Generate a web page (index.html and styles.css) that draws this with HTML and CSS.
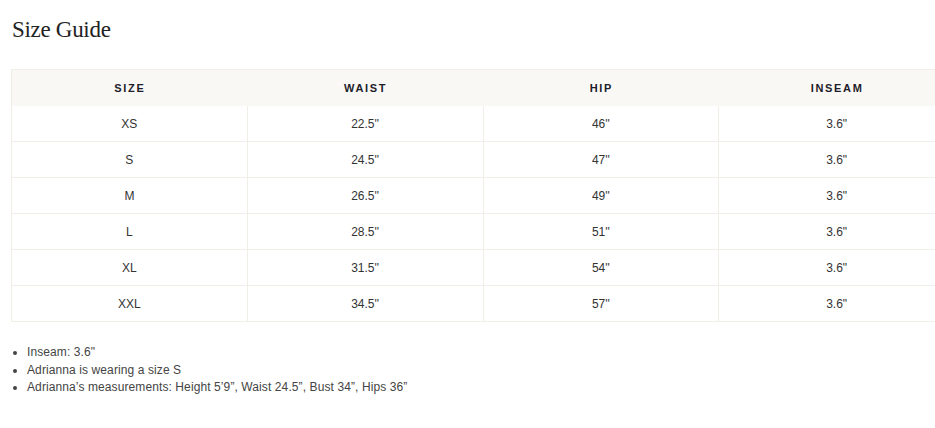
FILE: index.html
```html
<!DOCTYPE html>
<html lang="en">
<head>
<meta charset="utf-8">
<title>Size Guide</title>
<link rel="stylesheet" href="styles.css">
</head>
<body>
<div class="page">
  <h1 class="title">Size Guide</h1>
  <div class="table-wrap">
    <table class="size-table">
      <thead>
        <tr><th>SIZE</th><th>WAIST</th><th>HIP</th><th>INSEAM</th></tr>
      </thead>
      <tbody>
        <tr><td>XS</td><td>22.5''</td><td>46''</td><td>3.6"</td></tr>
        <tr><td>S</td><td>24.5''</td><td>47''</td><td>3.6"</td></tr>
        <tr><td>M</td><td>26.5''</td><td>49''</td><td>3.6"</td></tr>
        <tr><td>L</td><td>28.5''</td><td>51''</td><td>3.6"</td></tr>
        <tr><td>XL</td><td>31.5''</td><td>54''</td><td>3.6"</td></tr>
        <tr><td>XXL</td><td>34.5''</td><td>57''</td><td>3.6"</td></tr>
      </tbody>
    </table>
  </div>
  <ul class="notes">
    <li>Inseam: 3.6"</li>
    <li>Adrianna is wearing a size S</li>
    <li>Adrianna’s measurements: Height 5’9”, Waist 24.5”, Bust 34”, Hips 36”</li>
  </ul>
</div>
</body>
</html>
```
FILE: styles.css
```css
html, body {
  margin: 0;
  padding: 0;
  background: #ffffff;
}
body {
  overflow: hidden;
  font-family: "Liberation Sans", Arial, sans-serif;
}
.page {
  padding: 15px 0 0 11px;
}
.title {
  margin: 0;
  font-family: "Liberation Serif", "Times New Roman", serif;
  font-weight: 400;
  font-size: 23px;
  line-height: 30px;
  color: #222222;
  letter-spacing: -0.3px;
  padding-left: 1px;
}
.table-wrap {
  margin-top: 24px;
  overflow: hidden;
}
.size-table {
  border-collapse: separate;
  border-spacing: 0;
  table-layout: fixed;
  width: 944px;
  border-top: 1px solid #f0eee6;
  border-left: 1px solid #f0eee6;
}
.size-table th {
  height: 36px;
  padding: 0;
  background: #faf8f4;
  font-size: 11px;
  font-weight: 700;
  letter-spacing: 1.7px;
  color: #1e1d2b;
  text-align: center;
  vertical-align: middle;
}
.size-table td {
  height: 35px;
  padding: 0;
  font-size: 12px;
  color: #333333;
  text-align: center;
  vertical-align: middle;
  border-right: 1px solid #f0eee6;
  border-bottom: 1px solid #f0eee6;
}
.notes {
  margin: 22px 0 0 0;
  padding: 0 0 0 16px;
  font-size: 12px;
  line-height: 17.5px;
  color: #444444;
  letter-spacing: 0.1px;
}
```
